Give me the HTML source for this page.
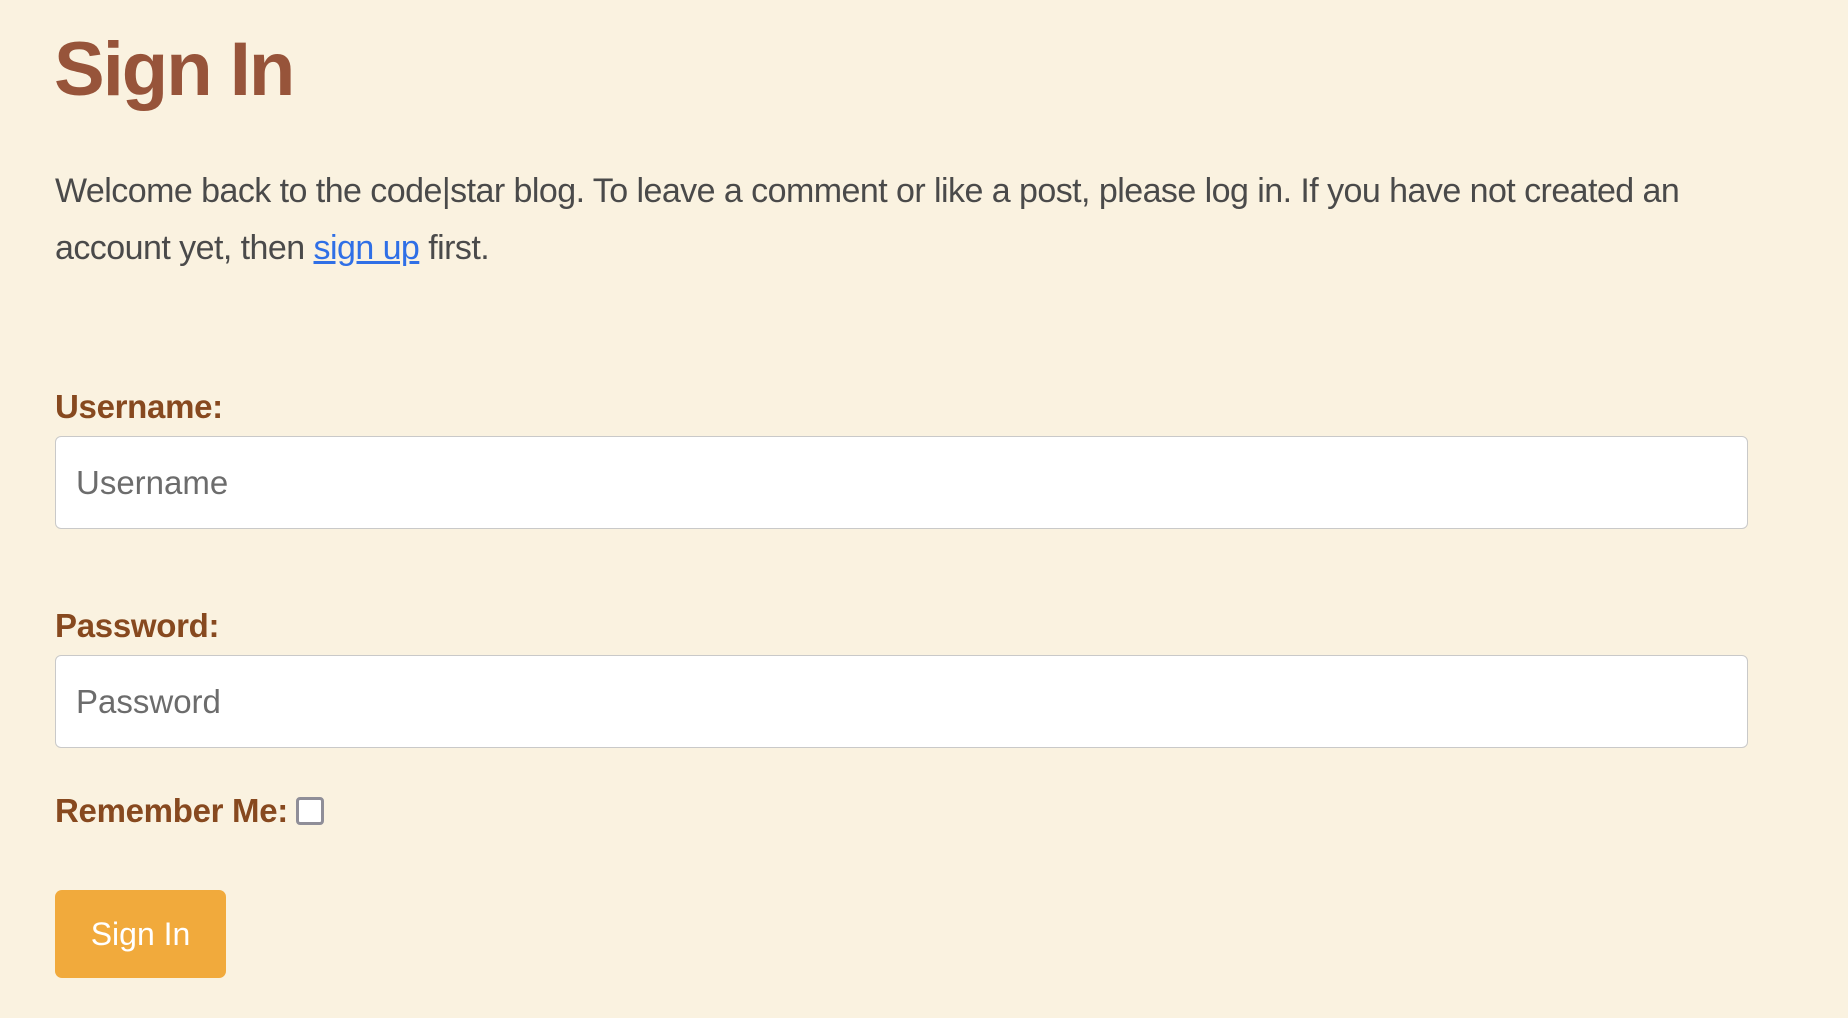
<!DOCTYPE html>
<html><head><meta charset="utf-8"><style>
html,body{margin:0;padding:0;background:#faf2e0;width:1848px;height:1018px;overflow:hidden;font-family:"Liberation Sans",sans-serif}
h1{position:absolute;left:54px;top:20px;margin:0;font-size:76px;font-weight:bold;color:#97543a;letter-spacing:-2px;line-height:100px}
p{position:absolute;left:55px;top:163px;margin:0;width:1780px;font-size:34px;line-height:57px;color:#4a4a4a;letter-spacing:-0.55px;white-space:nowrap}
p a{color:#2f6fe6;text-decoration:underline}
.lab{position:absolute;left:55px;font-size:33px;font-weight:bold;color:#87491f;letter-spacing:-0.3px}
.inp{position:absolute;left:55px;width:1693px;height:93px;background:#fff;border:1px solid #c9c9c9;border-radius:6px;box-sizing:border-box;font-size:33px;color:#6c6c6c;padding-left:20px;line-height:91px}
.cb{display:inline-block;vertical-align:-3px;margin-left:8px;width:28px;height:28px;border:3px solid #8f8e98;border-radius:4px;background:#fff;box-sizing:border-box}
.btn{position:absolute;left:55px;top:890px;width:171px;height:88px;background:#f1aa3c;border-radius:7px;color:#fff;font-size:32px;text-align:center;line-height:88px}
</style></head><body>
<h1>Sign In</h1>
<p>Welcome back to the code|star blog. To leave a comment or like a post, please log in. If you have not created an<br>account yet, then <a>sign up</a> first.</p>
<div class="lab" style="top:388px">Username:</div>
<div class="inp" style="top:436px">Username</div>
<div class="lab" style="top:607px">Password:</div>
<div class="inp" style="top:655px">Password</div>
<div class="lab" style="top:792px">Remember Me:<span class="cb"></span></div>
<div class="btn">Sign In</div>
</body></html>
